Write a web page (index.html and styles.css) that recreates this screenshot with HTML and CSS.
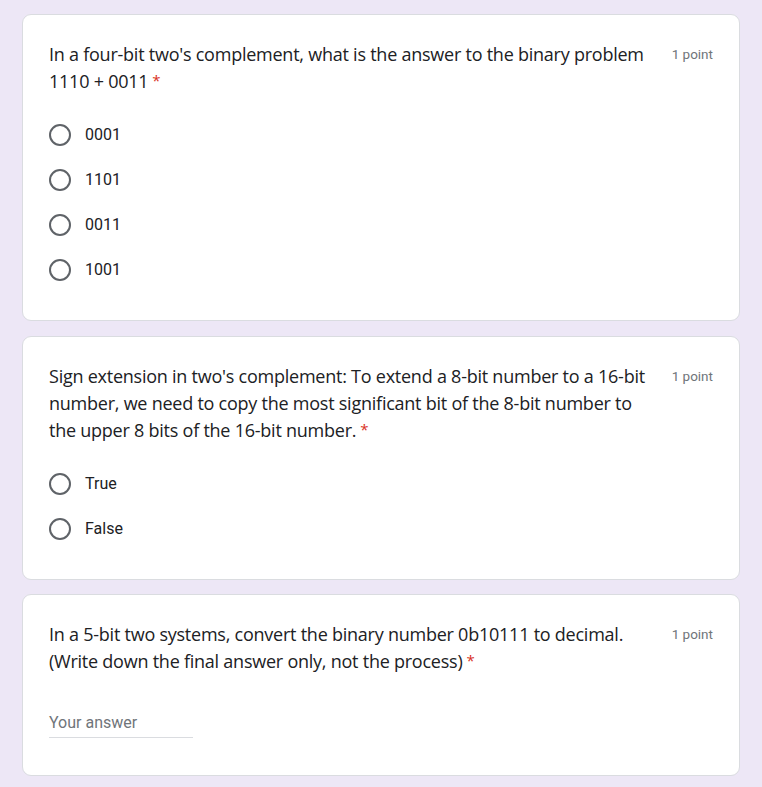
FILE: index.html
```html
<!DOCTYPE html>
<html lang="en">
<head>
<meta charset="UTF-8">
<meta name="viewport" content="width=device-width, initial-scale=1.0">
<title>Quiz</title>
<link rel="stylesheet" href="styles.css">
</head>
<body>
<div class="form">
  <div class="card">
    <div class="q-head">
      <div class="q-title">In a four-bit two's complement, what is the answer to the binary problem<br>1110 + 0011<span class="req">*</span></div>
      <div class="q-points">1 point</div>
    </div>
    <div class="options">
      <label class="option"><span class="radio"></span><span class="opt-text">0001</span></label>
      <label class="option"><span class="radio"></span><span class="opt-text">1101</span></label>
      <label class="option"><span class="radio"></span><span class="opt-text">0011</span></label>
      <label class="option"><span class="radio"></span><span class="opt-text">1001</span></label>
    </div>
  </div>
  <div class="card">
    <div class="q-head">
      <div class="q-title">Sign extension in two's complement: To extend a 8-bit number to a 16-bit<br>number, we need to copy the most significant bit of the 8-bit number to<br>the upper 8 bits of the 16-bit number.<span class="req">*</span></div>
      <div class="q-points">1 point</div>
    </div>
    <div class="options">
      <label class="option"><span class="radio"></span><span class="opt-text">True</span></label>
      <label class="option"><span class="radio"></span><span class="opt-text">False</span></label>
    </div>
  </div>
  <div class="card card-last">
    <div class="q-head">
      <div class="q-title">In a 5-bit two systems, convert the binary number 0b10111 to decimal.<br>(Write down the final answer only, not the process)<span class="req">*</span></div>
      <div class="q-points">1 point</div>
    </div>
    <div class="answer">Your answer</div>
  </div>
</div>
</body>
</html>
```

FILE: styles.css
```css
body { margin: 0; padding: 0; background-color: #ede7f6; font-family: Roboto, Arial, sans-serif; color: #202124; }
.form { width: 718px; margin: 14px auto 0; }
.card { background-color: #fff; border: 1px solid #dadce0; border-radius: 9px; padding: 26px 26px 28px; margin-bottom: 15px; }
.card-last { margin-top: -1px; }
.q-head { display: flex; justify-content: space-between; align-items: flex-start; }
.q-title { font-family: "Open Sans", Arial, sans-serif; font-size: 18px; line-height: 27px; letter-spacing: -0.24px; color: #202124; }
.req { color: #d93025; margin-left: 4px; font-size: 15px; vertical-align: top; line-height: 24px; }
.q-points { font-size: 13.5px; line-height: 27px; color: #70757a; white-space: nowrap; }
.options { margin-top: 17px; }
.option { display: flex; align-items: center; height: 45px; }
.radio { width: 18px; height: 18px; border: 2px solid #5f6368; border-radius: 50%; margin-right: 14px; }
.opt-text { font-size: 16px; color: #202124; }
.answer { width: 144px; margin: 38px 0 9px; padding-bottom: 4px; font-size: 16px; line-height: 20px; color: #70757a; border-bottom: 1px solid #dadce0; }
```
